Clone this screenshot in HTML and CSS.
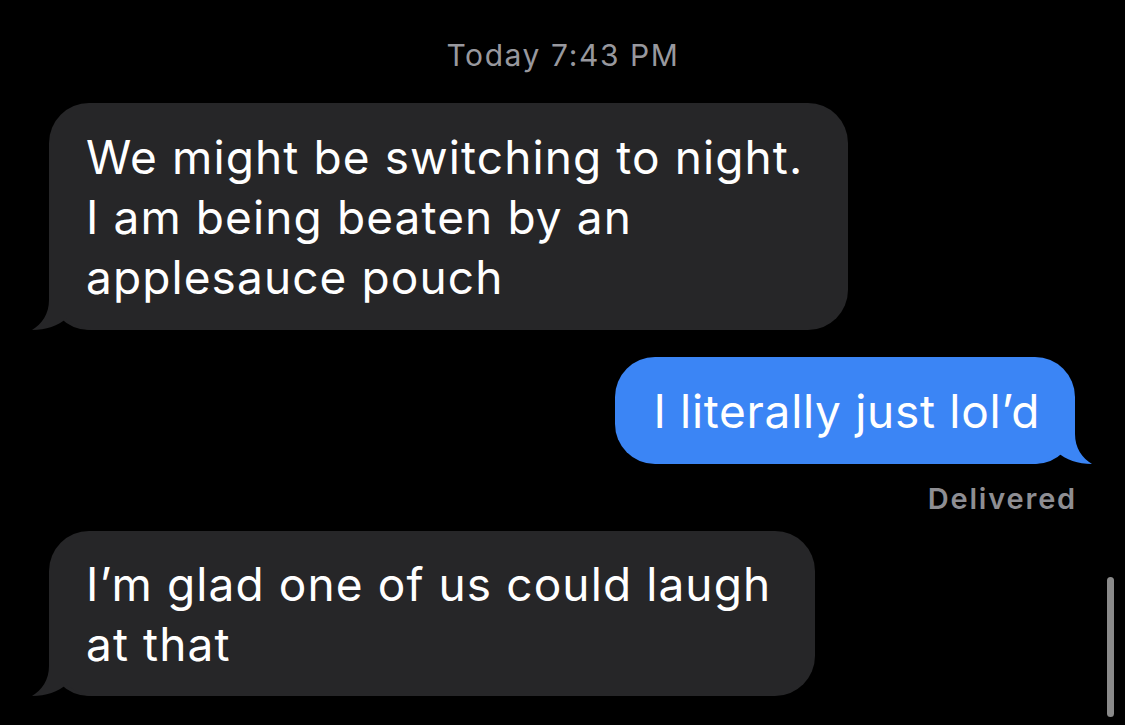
FILE: index.html
```html
<!DOCTYPE html>
<html lang="en">
<head>
  <meta charset="UTF-8">
  <title>Messages</title>
  <link rel="stylesheet" href="styles.css">
</head>
<body>
  <div class="thread">
    <div class="timestamp">Today 7:43 PM</div>

    <div class="bubble received">
      We might be switching to night.<br>
      I am being beaten by an<br>
      applesauce pouch
      <svg class="tail" width="60" height="40" viewBox="0 0 60 40"><path d="M17 0 L17 10 C17 24 10 34 0 40 C14 40 26 36 35 28 C42 35 50 40 60 40 L60 0 Z"/></svg>
    </div>

    <div class="bubble sent">
      I literally just lol’d
      <svg class="tail" width="60" height="40" viewBox="0 0 60 40"><path d="M43 0 L43 10 C43 24 50 34 60 40 C46 40 34 36 25 28 C18 35 10 40 0 40 L0 0 Z"/></svg>
    </div>
    <div class="status">Delivered</div>

    <div class="bubble received short">
      I’m glad one of us could laugh<br>
      at that
      <svg class="tail" width="60" height="40" viewBox="0 0 60 40"><path d="M17 0 L17 10 C17 24 10 34 0 40 C14 40 26 36 35 28 C42 35 50 40 60 40 L60 0 Z"/></svg>
    </div>
  </div>

  <div class="scrollbar"></div>
</body>
</html>
```

FILE: styles.css
```css
body {
  margin: 0;
  background-color: #000;
  font-family: Inter, "Noto Sans", sans-serif;
  height: 725px;
  overflow: hidden;
}

.thread {
  display: flex;
  flex-direction: column;
  padding: 37px 50px 0 49px;
}

.timestamp {
  align-self: center;
  color: #98989e;
  font-size: 30px;
  letter-spacing: 1.6px;
  margin-left: 2px;
  margin-bottom: 30px;
}

.bubble {
  position: relative;
  isolation: isolate;
  font-size: 46px;
  line-height: 60px;
  letter-spacing: 1.1px;
  color: #fff;
  padding: 24px 36px 23px 37px;
  border-radius: 40px;
}

/* tail sits under the text, over the bubble fill */
.bubble .tail {
  position: absolute;
  bottom: 0;
  z-index: -1;
}

.received {
  align-self: flex-start;
  background-color: #262628;
  width: 726px;
}

.received .tail {
  left: -17px;
  fill: #262628;
}

.received.short {
  width: 693px;
  margin-top: 15px;
  padding-top: 23px;
  padding-bottom: 22px;
}

.sent {
  align-self: flex-end;
  background-color: #3b85f5;
  margin-top: 27px;
  padding-left: 38px;
  padding-right: 35px;
  letter-spacing: 0.7px;
}

.sent .tail {
  right: -17px;
  fill: #3b85f5;
}

.status {
  align-self: flex-end;
  color: #8e8e93;
  font-size: 29px;
  font-weight: 600;
  letter-spacing: 1.8px;
  margin-top: 17px;
  margin-right: -2px;
}

.scrollbar {
  position: absolute;
  left: 1107px;
  top: 577px;
  width: 7px;
  height: 140px;
  border-radius: 4px;
  background-color: #8a8a8a;
}
```
